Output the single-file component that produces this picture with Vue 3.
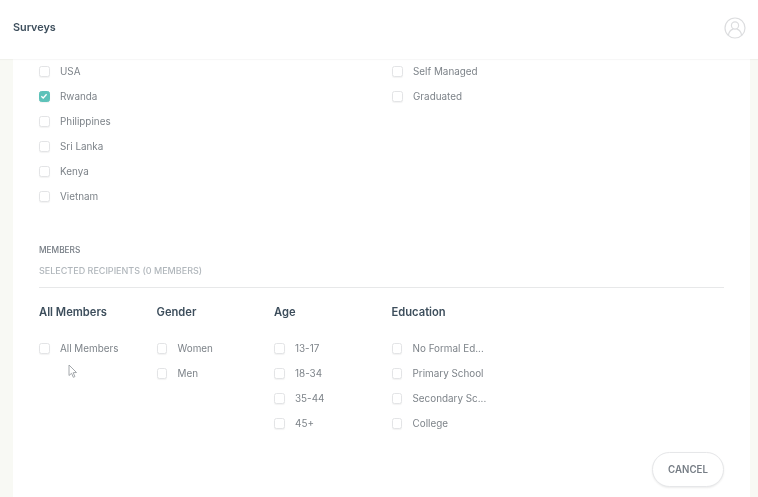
<script setup>
const regions = [
  { label: 'USA' },
  { label: 'Rwanda', checked: true },
  { label: 'Philippines' },
  { label: 'Sri Lanka' },
  { label: 'Kenya' },
  { label: 'Vietnam' },
]
const statuses = [{ label: 'Self Managed' }, { label: 'Graduated' }]
const groups = [
  { title: 'All Members', items: ['All Members'] },
  { title: 'Gender', items: ['Women', 'Men'] },
  { title: 'Age', items: ['13-17', '18-34', '35-44', '45+'] },
  { title: 'Education', items: ['No Formal Ed...', 'Primary School', 'Secondary Sc...', 'College'] },
]
</script>

<template>
  <div class="page">
    <header class="topbar">
      <span class="brand">Surveys</span>
      <svg class="avatar" width="22" height="22" viewBox="0 0 22 22" fill="none" stroke="#dcdddf" stroke-width="1.2">
        <circle cx="11" cy="11" r="10" />
        <circle cx="11" cy="8.5" r="3.6" />
        <path d="M4.4 18.4c.5-3.6 2.8-5.7 4.8-6.2M17.6 18.4c-.5-3.6-2.8-5.7-4.8-6.2" />
      </svg>
    </header>
    <main class="card">
      <section class="top-lists">
        <div class="list">
          <label v-for="r in regions" :key="r.label" class="row">
            <span class="box" :class="{ on: r.checked }">
              <svg v-if="r.checked" width="8" height="8" viewBox="0 0 8 8" fill="none" stroke="#fff" stroke-width="1.3"><path d="M1.3 4.2l1.9 1.8 3.4-3.8" /></svg>
            </span>
            <span class="txt">{{ r.label }}</span>
          </label>
        </div>
        <div class="list">
          <label v-for="s in statuses" :key="s.label" class="row">
            <span class="box"></span>
            <span class="txt">{{ s.label }}</span>
          </label>
        </div>
      </section>

      <div class="eyebrow">MEMBERS</div>
      <div class="recipients">SELECTED RECIPIENTS (0 MEMBERS)</div>

      <section class="groups">
        <div v-for="g in groups" :key="g.title" class="group">
          <h3 class="group-title">{{ g.title }}</h3>
          <label v-for="i in g.items" :key="i" class="row">
            <span class="box"></span>
            <span class="txt">{{ i }}</span>
          </label>
        </div>
        <svg class="cursor" width="10" height="15" viewBox="0 0 10 15" fill="#fff" stroke="#9a9ea3" stroke-width="0.9"><path d="M1 1v10.5l2.6-2.2 1.7 4 1.6-.7-1.7-3.9 3.3-.2z" /></svg>
      </section>

      <div class="actions">
        <button class="cancel" type="button">CANCEL</button>
      </div>
    </main>
  </div>
</template>

<style>
html, body { margin: 0; background: #f8f9f4; overflow: hidden; }
</style>

<style scoped>
.page {
  width: 758px;
  height: 497px;
  overflow: hidden;
  background: #f8f9f4;
  font-family: "Inter", "Liberation Sans", sans-serif;
  filter: blur(0.4px);
}
.topbar {
  position: relative;
  z-index: 2;
  height: 59px;
  box-sizing: border-box;
  padding: 0 12px 0 13px;
  display: flex;
  align-items: center;
  justify-content: space-between;
  background: #fff;
  box-shadow: 0 1px 1px rgba(40, 50, 60, 0.04);
}
.brand { font-size: 10.8px; font-weight: 600; color: #3d4e5c; position: relative; top: -2.5px; }
.avatar { position: relative; top: -2px; }
.card {
  margin: 0 8px 0 13px;
  padding: 0 26px;
  background: #fff;
  height: 438px;
}
.top-lists { display: flex; height: 165px; padding-top: 1px; box-sizing: border-box; }
.list { flex: none; width: 353px; display: flex; flex-direction: column; gap: 3px; }
.row { display: flex; align-items: center; height: 22px; }
.box {
  box-sizing: border-box;
  width: 10.5px;
  height: 11px;
  border: 1px solid #e3e4e6;
  border-radius: 2.5px;
  background: #fff;
  box-shadow: 0 1px 1px rgba(0, 0, 0, 0.05);
  display: flex;
  align-items: center;
  justify-content: center;
  flex: none;
}
.box.on { background: #5dc2b9; border-color: #5dc2b9; }
.txt { margin-left: 10.5px; font-size: 9.9px; line-height: 12px; position: relative; top: -0.5px; color: #7d8389; white-space: nowrap; }
.eyebrow { font-size: 8.3px; font-weight: 500; color: #757c84; line-height: 10px; margin-top: 21px; }
.recipients {
  font-size: 9px;
  font-weight: 500;
  color: #b1b7bc;
  line-height: 12px;
  margin-top: 10px;
  padding-bottom: 10px;
  border-bottom: 1px solid #e7e8e9;
}
.groups { position: relative; display: flex; margin-top: 17px; }
.group { width: 117.5px; display: flex; flex-direction: column; gap: 3px; }
.group-title { margin: 0 0 15px; font-size: 11.2px; line-height: 14px; font-weight: 600; color: #3d4e5c; }
.cursor { position: absolute; left: 29px; top: 59px; }
.actions { display: flex; justify-content: flex-end; margin-top: 18px; }
.cancel {
  width: 72px;
  height: 35px;
  border-radius: 18px;
  border: 1px solid #e6e7e9;
  background: #fff;
  box-shadow: 0 1px 2px rgba(0, 0, 0, 0.08);
  font-family: inherit;
  font-size: 9.7px;
  font-weight: 600;
  color: #767d85;
  padding: 0;
}
</style>
